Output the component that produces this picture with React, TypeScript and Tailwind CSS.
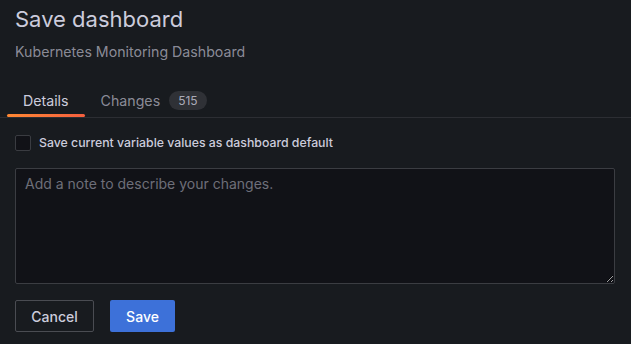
import React from "react";

export default function App() {
  return (
    <div
      className="w-[631px] h-[344px] bg-[#181b1f] text-[#ccccdc] overflow-hidden"
      style={{ fontFamily: "Inter, 'Noto Sans', sans-serif" }}
    >
      <div className="px-[15px] pt-[4px]">
        <h1 className="text-[22px] leading-[30px] font-normal text-[#ccccdc]">Save dashboard</h1>
        <div className="mt-[9px] text-[14.2px] leading-[18px] text-[#ccccdc]/65">
          Kubernetes Monitoring Dashboard
        </div>
      </div>
      <div className="mt-[28px] flex items-end border-b border-[#2c2e33] pl-[7px]">
        <div className="relative px-[16px] h-[28px] flex items-start text-[14.2px] leading-[18px] text-[#ccccdc]">
          <span className="pt-[3px]">Details</span>
          <div className="absolute left-0 right-0 bottom-0 h-[3px] rounded-full bg-gradient-to-r from-[#ff8833] to-[#f55f3e]" />
        </div>
        <div className="px-[16px] h-[28px] flex items-start text-[14.2px] leading-[18px] text-[#ccccdc]/65">
          <span className="pt-[3px]">Changes</span>
          <span className="ml-[9px] mt-[2px] h-[19px] px-[9px] rounded-full bg-[#2f3136] text-[12px] leading-[19px] text-[#ccccdc]/80">
            515
          </span>
        </div>
      </div>
      <div className="px-[15px]">
        <label className="mt-[17px] flex items-center gap-[8px]">
          <span className="w-[16px] h-[16px] rounded-[2px] border border-[#3a3c41] bg-[#111217]" />
          <span className="text-[12.3px] font-medium leading-[16px] text-[#ccccdc]">
            Save current variable values as dashboard default
          </span>
        </label>
        <textarea
          className="mt-[17px] block w-[600px] h-[116px] bg-[#111217] border border-[#3b3d42] rounded-[2px] px-[9px] py-[5px] text-[14px] leading-[20px] text-[#ccccdc] placeholder:text-[#ccccdc]/50 outline-none"
          placeholder="Add a note to describe your changes."
        />
        <div className="mt-[16px] flex gap-[16px]">
          <button className="h-[32px] w-[79px] border border-[#4a4c52] rounded-[2px] text-[14px] font-medium text-[#ccccdc]">
            Cancel
          </button>
          <button className="h-[32px] w-[65px] bg-[#3d71d9] rounded-[2px] text-[14px] font-medium text-white">
            Save
          </button>
        </div>
      </div>
    </div>
  );
}
